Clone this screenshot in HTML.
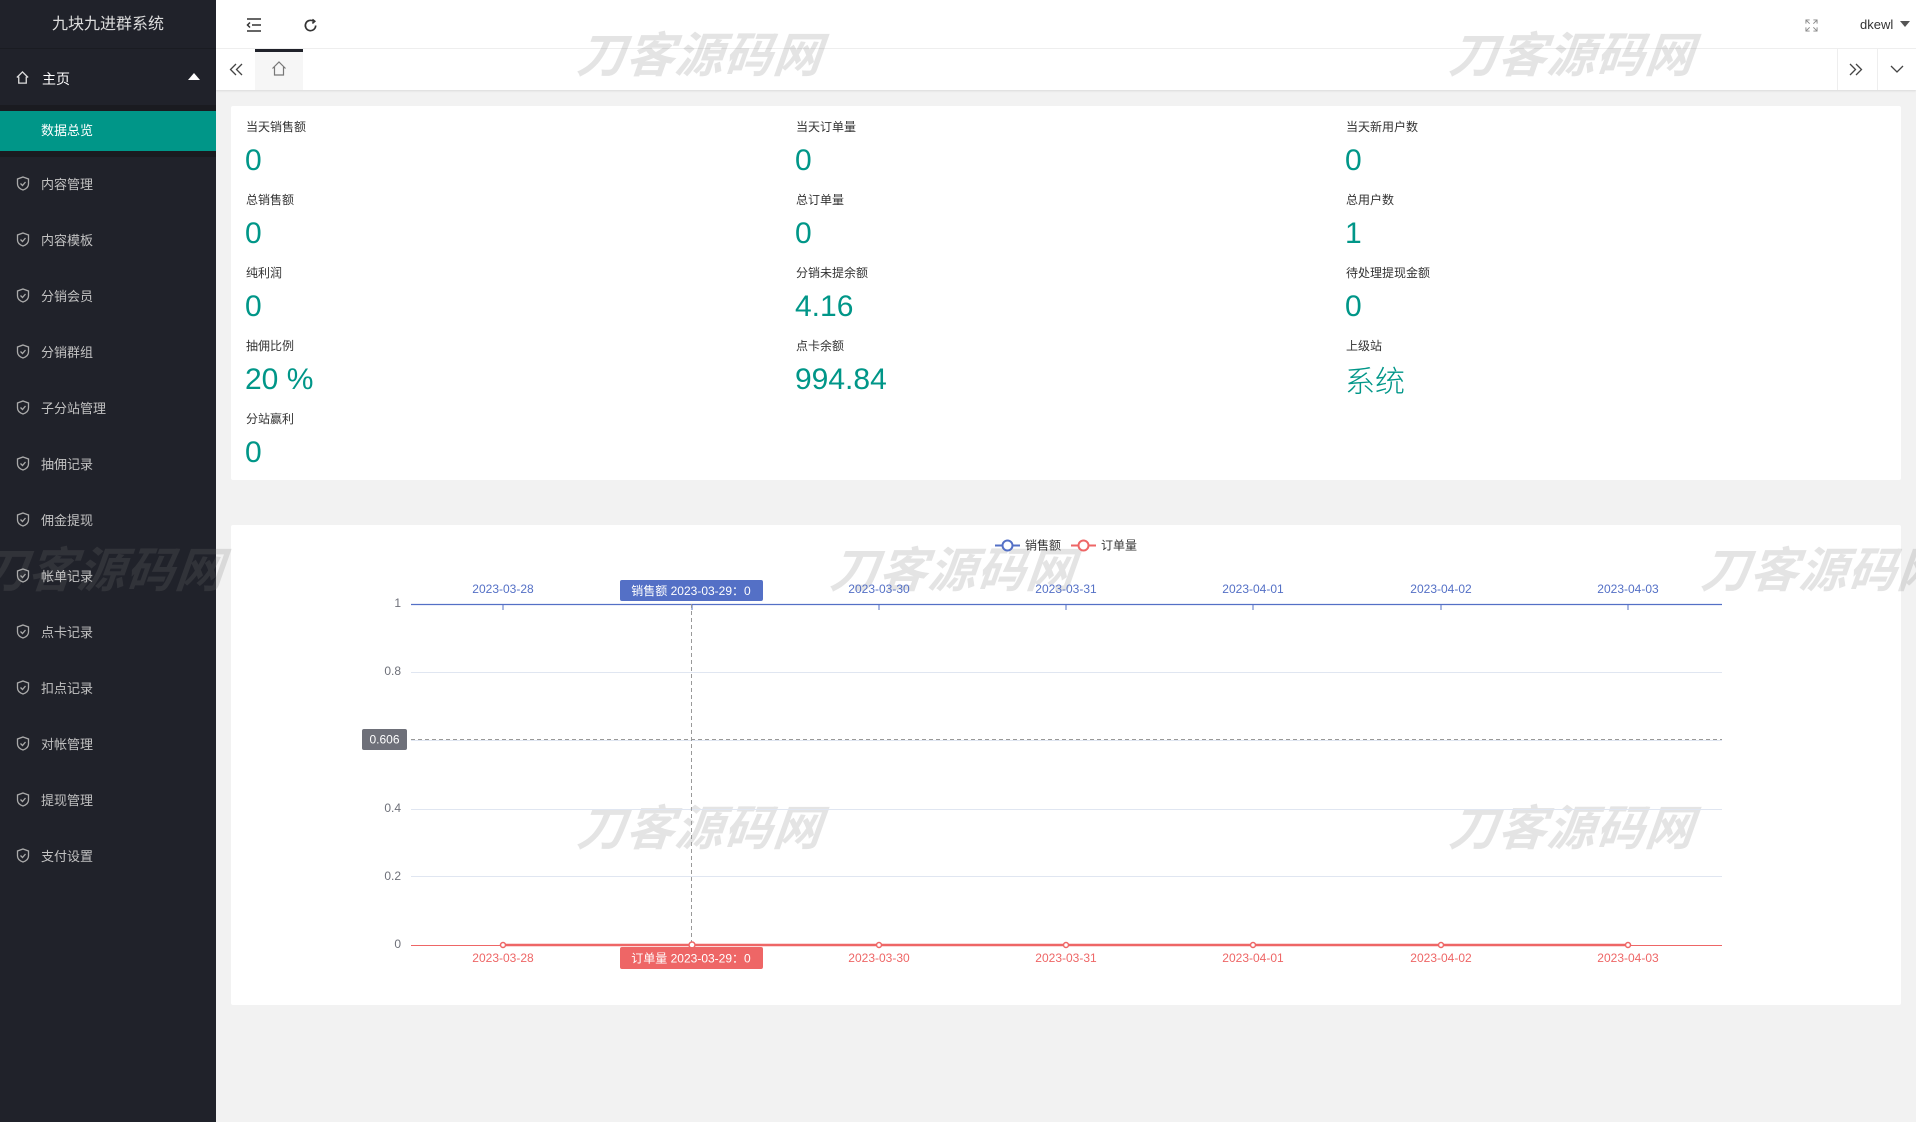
<!DOCTYPE html>
<html><head><meta charset="utf-8"><style>
*{margin:0;padding:0;box-sizing:border-box}
body{width:1916px;height:1122px;overflow:hidden;background:#f2f2f2;font-family:"Liberation Sans","Noto Sans CJK SC",sans-serif;position:relative}
.side{position:absolute;left:0;top:0;width:216px;height:1122px;background:#20222a;color:#c2c2c2}
.title{height:49px;line-height:49px;text-align:center;color:#dcdcdc;font-size:16px;border-bottom:1px solid #1a1c22}
.home{position:absolute;top:49px;left:0;width:216px;height:56px;color:#fff;font-size:14px}
.home span{position:absolute;left:42px;top:20px}
.sub{position:absolute;top:105px;left:0;width:216px;height:52px;background:#1a1b20}
.act{position:absolute;top:111px;left:0;width:216px;height:40px;background:#009688;color:#fff;font-size:13px;line-height:40px;padding-left:41px}
.mi{position:absolute;left:0;width:216px;font-size:13px;color:#c2c2c2}
.mi svg{position:absolute;left:16px;top:-8px}
.mi span{position:absolute;left:41px;top:-10px}
.hdr{position:absolute;left:216px;top:0;right:0;height:49px;background:#fff;border-bottom:1px solid #f0f0f0}
.tabs{position:absolute;left:216px;top:49px;right:0;height:41px;background:#fff;box-shadow:0 1px 2px rgba(0,0,0,.1)}
.card{position:absolute;background:#fff;border-radius:2px}
.lb{position:absolute;font-size:12px;color:#333}
.v{position:absolute;font-size:30px;color:#009688}
.wm{position:absolute;font-size:48px;font-weight:bold;font-style:italic;color:rgba(120,120,120,0.2);letter-spacing:1px;white-space:nowrap;font-family:"Noto Sans CJK SC",sans-serif;transform:skewX(-6deg)}
</style></head><body>
<div class="side">
<div class="title">九块九进群系统</div>
<div class="home"><svg style="position:absolute;left:15px;top:21px" width="15" height="15" viewBox="0 0 16 16" fill="none" stroke="#ddd" stroke-width="1.4"><path d="M2 8L8 2l6 6M4 7v7h8V7"/></svg><span>主页</span><svg style="position:absolute;left:188px;top:24px" width="12" height="7"><path d="M0 7L6 0l6 7z" fill="#fff"/></svg></div>
<div class="sub"></div>
<div class="act">数据总览</div>
</div>
<div class="hdr">
<svg style="position:absolute;left:30px;top:18px" width="16" height="14" viewBox="0 0 16 14" stroke="#333" stroke-width="1.5"><path d="M1 1h14M6 7h9M1 13h14"/><path d="M4 4.5L1.5 7 4 9.5" fill="none"/></svg>
<svg style="position:absolute;left:87px;top:18px" width="15" height="15" viewBox="0 0 16 16" fill="none" stroke="#333" stroke-width="1.8"><path d="M13.5 8A5.5 5.5 0 1 1 11 3.4"/><path d="M10 1.5l2.5 2-2.5 2.3" /></svg>
<svg style="position:absolute;left:1589px;top:19px" width="13" height="13" viewBox="0 0 14 14" stroke="#888" stroke-width="1" fill="none"><path d="M1 5V1h4M1 1l4 4M13 5V1H9M13 1L9 5M1 9v4h4M1 13l4-4M13 9v4H9M13 13L9 9"/></svg>
<div style="position:absolute;left:1644px;top:17px;font-size:13px;color:#333">dkewl</div>
<svg style="position:absolute;left:1684px;top:21px" width="10" height="6"><path d="M0 0h10L5 6z" fill="#555"/></svg>
</div>
<div class="tabs">
<svg style="position:absolute;left:13px;top:14px" width="14" height="13" viewBox="0 0 14 13" fill="none" stroke="#444" stroke-width="1.3"><path d="M7 1L1.5 6.5 7 12M13 1L7.5 6.5 13 12"/></svg>
<div style="position:absolute;left:39px;top:0;width:48px;height:41px;background:#f6f6f6;border-top:3px solid #20222a"></div>
<svg style="position:absolute;left:55px;top:12px" width="16" height="15" viewBox="0 0 16 15" fill="none" stroke="#777" stroke-width="1.2"><path d="M1.5 7.5L8 1l6.5 6.5M3.5 6v8h9V6"/></svg>
<div style="position:absolute;left:1621px;top:0;width:1px;height:41px;background:#eee"></div>
<div style="position:absolute;left:1661px;top:0;width:1px;height:41px;background:#eee"></div>
<svg style="position:absolute;left:1633px;top:14px" width="14" height="13" viewBox="0 0 14 13" fill="none" stroke="#444" stroke-width="1.3"><path d="M1 1l5.5 5.5L1 12M7 1l5.5 5.5L7 12"/></svg>
<svg style="position:absolute;left:1674px;top:16px" width="14" height="8" viewBox="0 0 14 8" fill="none" stroke="#444" stroke-width="1.3"><path d="M1 1l6 6 6-6"/></svg>
</div>
<div class="card" style="left:231px;top:106px;width:1670px;height:374px">
<div class="lb" style="left:15px;top:12px">当天销售额</div><div class="v" style="left:14px;top:38px">0</div>
<div class="lb" style="left:565px;top:12px">当天订单量</div><div class="v" style="left:564px;top:38px">0</div>
<div class="lb" style="left:1115px;top:12px">当天新用户数</div><div class="v" style="left:1114px;top:38px">0</div>
<div class="lb" style="left:15px;top:85px">总销售额</div><div class="v" style="left:14px;top:111px">0</div>
<div class="lb" style="left:565px;top:85px">总订单量</div><div class="v" style="left:564px;top:111px">0</div>
<div class="lb" style="left:1115px;top:85px">总用户数</div><div class="v" style="left:1114px;top:111px">1</div>
<div class="lb" style="left:15px;top:158px">纯利润</div><div class="v" style="left:14px;top:184px">0</div>
<div class="lb" style="left:565px;top:158px">分销未提余额</div><div class="v" style="left:564px;top:184px">4.16</div>
<div class="lb" style="left:1115px;top:158px">待处理提现金额</div><div class="v" style="left:1114px;top:184px">0</div>
<div class="lb" style="left:15px;top:231px">抽佣比例</div><div class="v" style="left:14px;top:257px">20 %</div>
<div class="lb" style="left:565px;top:231px">点卡余额</div><div class="v" style="left:564px;top:257px">994.84</div>
<div class="lb" style="left:1115px;top:231px">上级站</div><div class="v" style="left:1114px;top:251px;font-family:'Noto Sans CJK SC',sans-serif;font-weight:300">系统</div>
<div class="lb" style="left:15px;top:304px">分站赢利</div><div class="v" style="left:14px;top:330px">0</div>
</div>
<div class="card" style="left:231px;top:525px;width:1670px;height:480px"></div>
<div class="wm" style="left:578px;top:16px">刀客源码网</div>
<div class="wm" style="left:1450px;top:16px">刀客源码网</div>
<div class="wm" style="left:-20px;top:531px">刀客源码网</div>
<div class="wm" style="left:831px;top:531px">刀客源码网</div>
<div class="wm" style="left:1702px;top:531px">刀客源码网</div>
<div class="wm" style="left:578px;top:789px">刀客源码网</div>
<div class="wm" style="left:1450px;top:789px">刀客源码网</div>
<svg style="position:absolute;left:0;top:0" width="1916" height="1122" font-family="Liberation Sans,Noto Sans CJK SC,sans-serif">
<g stroke="#e0e6f1" stroke-width="1"><path d="M411 672.5H1722M411 740.5H1722M411 809.5H1722M411 876.5H1722"/></g>
<path d="M411 604.5H1722" stroke="#5470c6" stroke-width="1.2"/>
<g stroke="#5470c6"><path d="M503 604v6M692 604v6M879 604v6M1066 604v6M1253 604v6M1441 604v6M1628 604v6"/></g>
<g font-size="12" fill="#5470c6" text-anchor="middle"><text x="503" y="593">2023-03-28</text><text x="879" y="593">2023-03-30</text><text x="1066" y="593">2023-03-31</text><text x="1253" y="593">2023-04-01</text><text x="1441" y="593">2023-04-02</text><text x="1628" y="593">2023-04-03</text></g>
<rect x="620" y="580" width="143" height="21" rx="2" fill="#5470c6"/><text x="691" y="595" font-size="12" fill="#fff" text-anchor="middle">销售额  2023-03-29：0</text>
<g font-size="12" fill="#6e7079" text-anchor="end"><text x="401" y="607">1</text><text x="401" y="675">0.8</text><text x="401" y="812">0.4</text><text x="401" y="880">0.2</text><text x="401" y="948">0</text></g>
<path d="M411 739.5H1722" stroke="#999" stroke-dasharray="4 3"/>
<path d="M691.5 604V945" stroke="#999" stroke-dasharray="4 3"/>
<rect x="362" y="729" width="45" height="21" rx="2" fill="#6e7079"/><text x="384.5" y="743.5" font-size="12" fill="#fff" text-anchor="middle">0.606</text>
<path d="M411 945.5H1722" stroke="#ee6666" stroke-width="1"/>
<path d="M503 945H1628" stroke="#ee6666" stroke-width="2.5"/>
<g fill="#fff" stroke="#ee6666" stroke-width="1.5"><circle cx="503" cy="945" r="2.5"/><circle cx="692" cy="945" r="3"/><circle cx="879" cy="945" r="2.5"/><circle cx="1066" cy="945" r="2.5"/><circle cx="1253" cy="945" r="2.5"/><circle cx="1441" cy="945" r="2.5"/><circle cx="1628" cy="945" r="2.5"/></g>
<g font-size="12" fill="#ee6666" text-anchor="middle"><text x="503" y="962">2023-03-28</text><text x="879" y="962">2023-03-30</text><text x="1066" y="962">2023-03-31</text><text x="1253" y="962">2023-04-01</text><text x="1441" y="962">2023-04-02</text><text x="1628" y="962">2023-04-03</text></g>
<rect x="620" y="947" width="143" height="22" rx="2" fill="#ee6666"/><text x="691" y="962.5" font-size="12" fill="#fff" text-anchor="middle">订单量  2023-03-29：0</text>
<path d="M995 545.5h25" stroke="#5470c6" stroke-width="2"/><circle cx="1007.5" cy="545.5" r="5" fill="#fff" stroke="#5470c6" stroke-width="2"/><text x="1025" y="549.5" font-size="12" fill="#333">销售额</text>
<path d="M1071 545.5h25" stroke="#ee6666" stroke-width="2"/><circle cx="1083.5" cy="545.5" r="5" fill="#fff" stroke="#ee6666" stroke-width="2"/><text x="1101" y="549.5" font-size="12" fill="#333">订单量</text>
</svg>
<div style="position:absolute;left:0;top:0">
<div class="mi" style="top:184px"><svg width="14" height="15" viewBox="0 0 14 15" fill="none" stroke="#aaa" stroke-width="1.3"><path d="M7 1l5.5 2v5c0 3-2.5 5-5.5 6C4 13 1.5 11 1.5 8V3z"/><path d="M4.5 7.5l2 2 3-3.5"/></svg><span>内容管理</span></div>
<div class="mi" style="top:240px"><svg width="14" height="15" viewBox="0 0 14 15" fill="none" stroke="#aaa" stroke-width="1.3"><path d="M7 1l5.5 2v5c0 3-2.5 5-5.5 6C4 13 1.5 11 1.5 8V3z"/><path d="M4.5 7.5l2 2 3-3.5"/></svg><span>内容模板</span></div>
<div class="mi" style="top:296px"><svg width="14" height="15" viewBox="0 0 14 15" fill="none" stroke="#aaa" stroke-width="1.3"><path d="M7 1l5.5 2v5c0 3-2.5 5-5.5 6C4 13 1.5 11 1.5 8V3z"/><path d="M4.5 7.5l2 2 3-3.5"/></svg><span>分销会员</span></div>
<div class="mi" style="top:352px"><svg width="14" height="15" viewBox="0 0 14 15" fill="none" stroke="#aaa" stroke-width="1.3"><path d="M7 1l5.5 2v5c0 3-2.5 5-5.5 6C4 13 1.5 11 1.5 8V3z"/><path d="M4.5 7.5l2 2 3-3.5"/></svg><span>分销群组</span></div>
<div class="mi" style="top:408px"><svg width="14" height="15" viewBox="0 0 14 15" fill="none" stroke="#aaa" stroke-width="1.3"><path d="M7 1l5.5 2v5c0 3-2.5 5-5.5 6C4 13 1.5 11 1.5 8V3z"/><path d="M4.5 7.5l2 2 3-3.5"/></svg><span>子分站管理</span></div>
<div class="mi" style="top:464px"><svg width="14" height="15" viewBox="0 0 14 15" fill="none" stroke="#aaa" stroke-width="1.3"><path d="M7 1l5.5 2v5c0 3-2.5 5-5.5 6C4 13 1.5 11 1.5 8V3z"/><path d="M4.5 7.5l2 2 3-3.5"/></svg><span>抽佣记录</span></div>
<div class="mi" style="top:520px"><svg width="14" height="15" viewBox="0 0 14 15" fill="none" stroke="#aaa" stroke-width="1.3"><path d="M7 1l5.5 2v5c0 3-2.5 5-5.5 6C4 13 1.5 11 1.5 8V3z"/><path d="M4.5 7.5l2 2 3-3.5"/></svg><span>佣金提现</span></div>
<div class="mi" style="top:576px"><svg width="14" height="15" viewBox="0 0 14 15" fill="none" stroke="#aaa" stroke-width="1.3"><path d="M7 1l5.5 2v5c0 3-2.5 5-5.5 6C4 13 1.5 11 1.5 8V3z"/><path d="M4.5 7.5l2 2 3-3.5"/></svg><span>帐单记录</span></div>
<div class="mi" style="top:632px"><svg width="14" height="15" viewBox="0 0 14 15" fill="none" stroke="#aaa" stroke-width="1.3"><path d="M7 1l5.5 2v5c0 3-2.5 5-5.5 6C4 13 1.5 11 1.5 8V3z"/><path d="M4.5 7.5l2 2 3-3.5"/></svg><span>点卡记录</span></div>
<div class="mi" style="top:688px"><svg width="14" height="15" viewBox="0 0 14 15" fill="none" stroke="#aaa" stroke-width="1.3"><path d="M7 1l5.5 2v5c0 3-2.5 5-5.5 6C4 13 1.5 11 1.5 8V3z"/><path d="M4.5 7.5l2 2 3-3.5"/></svg><span>扣点记录</span></div>
<div class="mi" style="top:744px"><svg width="14" height="15" viewBox="0 0 14 15" fill="none" stroke="#aaa" stroke-width="1.3"><path d="M7 1l5.5 2v5c0 3-2.5 5-5.5 6C4 13 1.5 11 1.5 8V3z"/><path d="M4.5 7.5l2 2 3-3.5"/></svg><span>对帐管理</span></div>
<div class="mi" style="top:800px"><svg width="14" height="15" viewBox="0 0 14 15" fill="none" stroke="#aaa" stroke-width="1.3"><path d="M7 1l5.5 2v5c0 3-2.5 5-5.5 6C4 13 1.5 11 1.5 8V3z"/><path d="M4.5 7.5l2 2 3-3.5"/></svg><span>提现管理</span></div>
<div class="mi" style="top:856px"><svg width="14" height="15" viewBox="0 0 14 15" fill="none" stroke="#aaa" stroke-width="1.3"><path d="M7 1l5.5 2v5c0 3-2.5 5-5.5 6C4 13 1.5 11 1.5 8V3z"/><path d="M4.5 7.5l2 2 3-3.5"/></svg><span>支付设置</span></div>
</div>
</body></html>
